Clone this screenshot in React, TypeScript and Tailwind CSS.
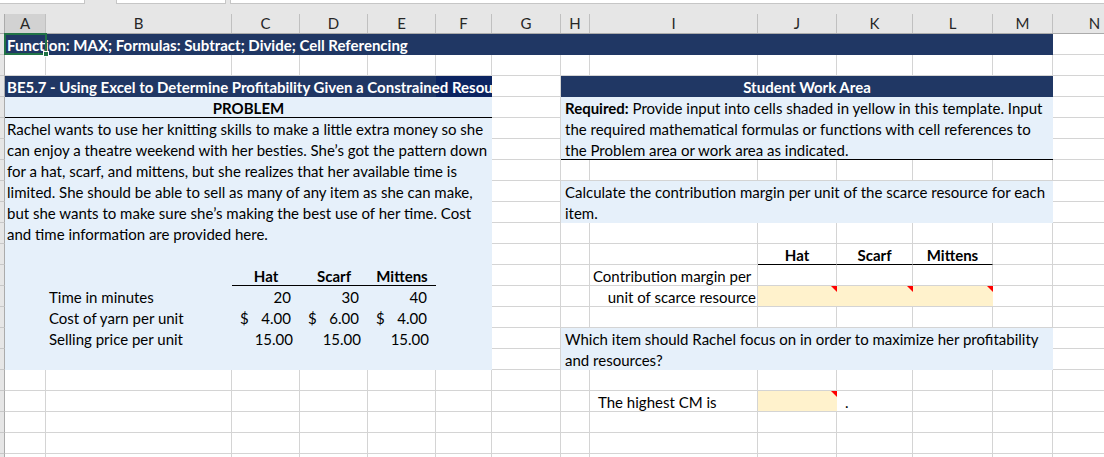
import React from "react";

type CellDef = [string, string?, React.ReactNode?];

const GRID = "border-r border-b border-[#d4d4d4]";
const NAVY = "bg-[#203764] pb-px text-white font-bold";
const BLUE = "bg-[#e6f0fa] pb-px";
const BLUE_UL = "bg-[#e6f0fa] border-b border-black";
const YEL = "bg-[#fff2cc] border-b border-[#d4d4d4]";
const UL = "border-r border-b border-r-[#d4d4d4] border-b-black";

function Tri() {
  return (
    <svg className="absolute right-0 top-0" width="6" height="6" viewBox="0 0 6 6">
      <polygon points="0,0 6,0 6,6" fill="#ff0000" />
    </svg>
  );
}

function Row({ cells }: { cells: CellDef[] }) {
  return (
    <div className="flex h-[21px]">
      <div className="w-[5px] h-full shrink-0 bg-[#e6e6e6] border-r border-b border-r-[#ababab] border-b-[#c8c8c8]" />
      {cells.map(([w, s, content], i) => (
        <div
          key={i}
          className={`relative shrink-0 h-full flex items-end whitespace-nowrap leading-[17px] ${w} ${s ?? GRID}`}
        >
          {content}
        </div>
      ))}
    </div>
  );
}

const A = "w-[41px]";
const B = "w-[186px]";
const C = "w-[68px]";
const D = "w-[68px]";
const E = "w-[68px]";
const F = "w-[56px]";
const Gc = "w-[69px]";
const H = "w-[29px]";
const I = "w-[168px]";
const J = "w-[79px]";
const K = "w-[76px]";
const L = "w-[80px]";
const M = "w-[60px]";
const N = "w-[84px]";
const AF = "w-[487px]";
const HM = "w-[492px]";

const whiteRight: CellDef[] = [[H], [I], [J], [K], [L], [M], [N]];

function leftText(t: string): CellDef[] {
  return [[AF, BLUE, <span className="pl-[2px]">{t}</span>]];
}
function rightBlue(t: React.ReactNode, ul = false): CellDef[] {
  return [[HM, ul ? BLUE_UL : BLUE, <span className="pl-[4px]">{t}</span>], [N]];
}

const blueLeftEmpty: CellDef[] = [[AF, BLUE]];

function tableRow(label: string, vals: React.ReactNode[]): CellDef[] {
  return [
    [A, BLUE],
    [B, BLUE, <span className="pl-[3px]">{label}</span>],
    [C, BLUE + " justify-between", vals[0]],
    [D, BLUE + " justify-between", vals[1]],
    [E, BLUE + " justify-between", vals[2]],
    [F, BLUE],
  ];
}

function Num({ v, pr = "pr-[9px]" }: { v: string; pr?: string }) {
  return <span className={`ml-auto ${pr}`}>{v}</span>;
}
function Acc({ v }: { v: string }) {
  return (
    <>
      <span className="pl-[8px]">$</span>
      <span className="pr-[9px]">{v}</span>
    </>
  );
}

export default function App() {
  const rows: CellDef[][] = [
    // r1
    [
      ["w-[1048px]", NAVY, <span className="pl-[2px]">Function: MAX; Formulas: Subtract; Divide; Cell Referencing</span>],
      [N],
    ],
    // r2
    [[A], [B], [C], [D], [E], [F], [Gc], [H], [I], [J], [K], [L], [M], [N]],
    // r3
    [
      [
        AF,
        "overflow-hidden pb-px bg-[linear-gradient(to_right,#203764_431px,#0b2461_431px)] text-white font-bold",
        <span className="pl-[2px]">BE5.7 - Using Excel to Determine Profitability Given a Constrained Resource</span>,
      ],
      [Gc],
      [HM, NAVY + " justify-center", <span>Student Work Area</span>],
      [N],
    ],
    // r4
    [
      [AF, BLUE_UL + " justify-center font-bold", <span>PROBLEM</span>],
      [Gc],
      ...rightBlue(
        <>
          <b>Required:</b> Provide input into cells shaded in yellow in this template. Input
        </>
      ),
    ],
    // r5
    [
      ...leftText("Rachel wants to use her knitting skills to make a little extra money so she"),
      [Gc],
      ...rightBlue("the required mathematical formulas or functions with cell references to"),
    ],
    // r6
    [
      ...leftText("can enjoy a theatre weekend with her besties. She\u2019s got the pattern down"),
      [Gc],
      ...rightBlue("the Problem area or work area as indicated.", true),
    ],
    // r7
    [...leftText("for a hat, scarf, and mittens, but she realizes that her available time is"), [Gc], ...whiteRight],
    // r8
    [
      ...leftText("limited. She should be able to sell as many of any item as she can make,"),
      [Gc],
      ...rightBlue("Calculate the contribution margin per unit of the scarce resource for each"),
    ],
    // r9
    [
      ...leftText("but she wants to make sure she\u2019s making the best use of her time. Cost"),
      [Gc],
      ...rightBlue("item."),
    ],
    // r10
    [...leftText("and time information are provided here."), [Gc], ...whiteRight],
    // r11
    [
      ...blueLeftEmpty,
      [Gc],
      [H],
      [I],
      [J, UL + " justify-center font-bold", <span>Hat</span>],
      [K, UL + " justify-center font-bold", <span>Scarf</span>],
      [L, UL + " justify-center font-bold", <span>Mittens</span>],
      [M],
      [N],
    ],
    // r12
    [
      [A, BLUE],
      [B, BLUE],
      [C, BLUE_UL + " justify-center font-bold", <span>Hat</span>],
      [D, BLUE_UL + " justify-center font-bold", <span>Scarf</span>],
      [E, BLUE_UL + " justify-center font-bold", <span>Mittens</span>],
      [F, BLUE],
      [Gc],
      [H],
      [I, GRID, <span className="pl-[3px]">Contribution margin per</span>],
      [J],
      [K],
      [L],
      [M],
      [N],
    ],
    // r13
    [
      ...tableRow("Time in minutes", [<Num v="20" />, <Num v="30" />, <Num v="40" />]),
      [Gc],
      [H],
      [I, GRID + " justify-end", <span className="pr-[1px]">unit of scarce resource</span>],
      [J, YEL, <Tri />],
      [K, YEL, <Tri />],
      [L, YEL, <Tri />],
      [M],
      [N],
    ],
    // r14
    [...tableRow("Cost of yarn per unit", [<Acc v="4.00" />, <Acc v="6.00" />, <Acc v="4.00" />]), [Gc], ...whiteRight],
    // r15
    [
      ...tableRow("Selling price per unit", [
        <Num v="15.00" pr="pr-[7px]" />,
        <Num v="15.00" pr="pr-[7px]" />,
        <Num v="15.00" pr="pr-[7px]" />,
      ]),
      [Gc],
      ...rightBlue("Which item should Rachel focus on in order to maximize her profitability"),
    ],
    // r16
    [...blueLeftEmpty, [Gc], ...rightBlue("and resources?")],
    // r17
    [[A], [B], [C], [D], [E], [F], [Gc], ...whiteRight],
    // r18
    [
      [A], [B], [C], [D], [E], [F], [Gc],
      [H],
      [I, GRID, <span className="pl-[8px]">The highest CM is</span>],
      [J, YEL, <Tri />],
      [K, GRID, <span className="pl-[8px]">.</span>],
      [L], [M], [N],
    ],
    // r19
    [[A], [B], [C], [D], [E], [F], [Gc], ...whiteRight],
    [[A], [B], [C], [D], [E], [F], [Gc], ...whiteRight],
    [[A], [B], [C], [D], [E], [F], [Gc], ...whiteRight],
  ];

  const headers: [string, string][] = [
    ["A", A], ["B", B], ["C", C], ["D", D], ["E", E], ["F", F], ["G", Gc],
    ["H", H], ["I", I], ["J", J], ["K", K], ["L", L], ["M", M], ["N", N],
  ];

  return (
    <div className="relative w-[1104px] h-[457px] overflow-hidden bg-white font-['Lato',sans-serif] text-[15px] text-black">
      {/* top strip */}
      <div className="h-[14px] bg-[#e6e6e6]">
        <div className="flex h-[4px]">
          <div className="w-[85px] bg-white border-r border-b border-[#c6c6c6]" />
          <div className="w-[31px]" />
          <div className="w-[110px] bg-white border-x border-b border-[#c6c6c6]" />
          <div className="w-[4px]" />
          <div className="flex-1 bg-white border-l border-b border-[#c6c6c6]" />
        </div>
      </div>
      {/* column headers */}
      <div className="flex h-[20px] bg-[#e6e6e6] border-b border-[#ababab] w-[1200px]">
        <div className="w-[5px] shrink-0 border-r border-[#ababab]" />
        {headers.map(([l, w], i) => (
          <div
            key={l}
            className={`${w} shrink-0 flex items-center justify-center border-r border-[#c0c0c0] leading-[17px] text-[#262626] ${
              i === 0 ? "bg-[#d2d2d2] text-[#217346]" : ""
            }`}
          >
            {l}
          </div>
        ))}
      </div>
      {/* rows */}
      <div className="w-[1200px]">
        {rows.map((cells, i) => (
          <Row key={i} cells={cells} />
        ))}
      </div>
      {/* selection */}
      <div className="absolute left-[4px] top-[33px] w-[43px] h-[22px] border-2 border-[#217346]" />
      <div className="absolute left-[43px] top-[51px] w-[6px] h-[6px] bg-[#217346] border border-white" />
    </div>
  );
}
